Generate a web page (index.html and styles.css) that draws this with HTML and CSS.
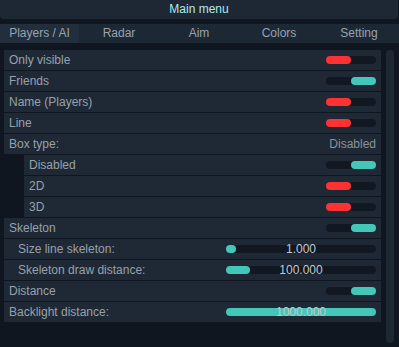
FILE: index.html
```html
<!DOCTYPE html>
<html>
<head>
<meta charset="utf-8">
<link rel="stylesheet" href="styles.css">
</head>
<body>
<div class="title">Main menu</div>
<div class="tabs">
  <div class="tab active">Players / AI</div>
  <div class="tab">Radar</div>
  <div class="tab">Aim</div>
  <div class="tab">Colors</div>
  <div class="tab">Setting</div>
</div>
<div class="content">
  <div class="list">
    <div class="row"><span class="label">Only visible</span><span class="toggle"><span class="knob off"></span></span></div>
    <div class="row"><span class="label">Friends</span><span class="toggle"><span class="knob on"></span></span></div>
    <div class="row"><span class="label">Name (Players)</span><span class="toggle"><span class="knob off"></span></span></div>
    <div class="row"><span class="label">Line</span><span class="toggle"><span class="knob off"></span></span></div>
    <div class="row"><span class="label">Box type:</span><span class="value">Disabled</span></div>
    <div class="row indent"><span class="label">Disabled</span><span class="toggle"><span class="knob on"></span></span></div>
    <div class="row indent"><span class="label">2D</span><span class="toggle"><span class="knob off"></span></span></div>
    <div class="row indent"><span class="label">3D</span><span class="toggle"><span class="knob off"></span></span></div>
    <div class="row"><span class="label">Skeleton</span><span class="toggle"><span class="knob on"></span></span></div>
    <div class="row sub"><span class="label">Size line skeleton:</span><span class="slider"><span class="fill" style="width:10px"></span><span class="num">1.000</span></span></div>
    <div class="row sub"><span class="label">Skeleton draw distance:</span><span class="slider"><span class="fill" style="width:24px"></span><span class="num">100.000</span></span></div>
    <div class="row"><span class="label">Distance</span><span class="toggle"><span class="knob on"></span></span></div>
    <div class="row"><span class="label">Backlight distance:</span><span class="slider"><span class="fill" style="width:150px"></span><span class="num">1000.000</span></span></div>
  </div>
  <div class="scrollbar"></div>
</div>
</body>
</html>
```
FILE: styles.css
```css
html, body {
  margin: 0;
  padding: 0;
}
body {
  width: 399px;
  height: 347px;
  background: #10161f;
  font-family: "Liberation Sans", Arial, sans-serif;
  font-size: 12px;
  color: #98a1ab;
  overflow: hidden;
}
.title {
  height: 19px;
  line-height: 19px;
  background: #1e2834;
  border-radius: 0 0 4px 4px;
  text-align: center;
  color: #aeeaea;
  margin-right: 1px;
}
.tabs {
  margin-top: 5px;
  height: 19px;
  display: grid;
  grid-template-columns: 79px 80px 80px 80px 80px;
  background: #1d2835;
}
.tab {
  line-height: 19px;
  text-align: center;
  color: #98a3ae;
}
.tab.active {
  background: #222e3b;
}
.content {
  margin-top: 7px;
  display: flex;
  align-items: flex-start;
}
.list {
  margin-left: 4px;
  width: 377px;
  display: flex;
  flex-direction: column;
  gap: 1px;
}
.row {
  height: 20px;
  background: #1f2935;
  display: flex;
  align-items: center;
  justify-content: space-between;
  padding: 0 5px 0 5px;
}
.row.indent {
  margin-left: 20px;
}
.row.sub .label {
  padding-left: 9px;
}
.label {
  color: #98a1ab;
}
.value {
  color: #8a929b;
}
.toggle {
  width: 50px;
  height: 8px;
  border-radius: 4px;
  background: #111821;
  display: flex;
}
.knob {
  width: 25px;
  height: 8px;
  border-radius: 4px;
}
.knob.off {
  background: #fe3232;
}
.knob.on {
  background: #43c7b9;
  margin-left: 25px;
}
.slider {
  position: relative;
  width: 150px;
  height: 8px;
  border-radius: 4px;
  background: #111821;
  display: flex;
}
.fill {
  height: 8px;
  border-radius: 4px;
  background: #43c7b9;
}
.num {
  position: absolute;
  left: 0;
  right: 0;
  top: -4px;
  line-height: 16px;
  text-align: center;
  color: #c2c9d0;
  font-size: 12px;
}
.scrollbar {
  margin-left: 5px;
  width: 8px;
  height: 293px;
  border-radius: 4px;
  background: #1e2833;
}
```
